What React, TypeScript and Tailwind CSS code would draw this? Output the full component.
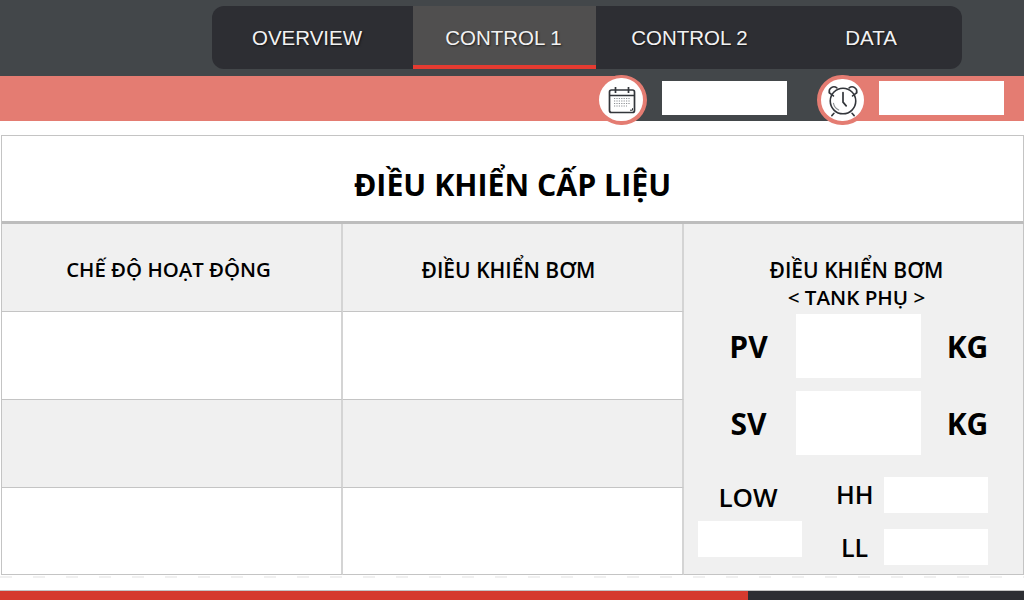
import React from 'react';

const font = "font-['Open_Sans','Noto_Sans',sans-serif]";

const CalendarIcon = () => (
  <svg className="ml-[2px]" width="30" height="30" viewBox="0 0 30 30" fill="none" stroke="#33363b" strokeWidth="1.7">
    <rect x="2.5" y="5" width="25" height="22.5" rx="2" />
    <path d="M2.5 10.5h25M8.5 2v6M21.5 2v6" />
    <path d="M23 25.2h2.5v-2" strokeWidth="1" />
    <g stroke="#8b8e92" strokeWidth="1.2" strokeDasharray="1.2 1.2">
      <path d="M7 13.5h16M7 16h16M7 18.5h16M7 21h13" />
    </g>
  </svg>
);

const ClockIcon = () => (
  <svg width="34" height="34" viewBox="0 0 32 32" fill="none" stroke="#33363b" strokeWidth="1.5" strokeLinecap="round">
    <circle cx="16" cy="17" r="12" />
    <path d="M3.2 9.2a4.4 4.4 0 0 1 7-4.6M28.8 9.2a4.4 4.4 0 0 0-7-4.6" />
    <path d="M3.2 9.2l3.8 3M28.8 9.2l-3.8 3" />
    <path d="M16 9v9l3 3.5" strokeWidth="1.6" />
    <path d="M7.5 28.5l-2 2.2M24.5 28.5l2 2.2" />
    <path d="M7 19a9 9 0 0 0 5 6.5" stroke="#8b8e92" strokeWidth="1" />
  </svg>
);

const Tab = ({ text, className, active }: { text: string; className: string; active?: boolean }) => (
  <div
    className={`${className} h-full flex items-center justify-center text-[20.5px] font-['Liberation_Sans',sans-serif] text-[#f2f2f2] [text-shadow:1px_1px_2px_rgba(0,0,0,0.6)] ${
      active ? 'bg-[#504f4f] border-b-[4px] border-[#e53b31] pt-[5px]' : 'pt-px'
    }`}
  >
    {text}
  </div>
);

const Cell = ({ text, gray, wide, last }: { text?: string; gray?: boolean; wide?: boolean; last?: boolean }) => (
  <div
    className={`${last ? 'h-[87px]' : 'h-[88px]'} flex items-center justify-center border-b border-b-[#c4c4c4] border-r-2 border-r-[#d4d4d4] font-semibold text-black ${
      wide ? 'pt-[7px] pr-[8px] text-[21px]' : 'pt-[3px] pr-[6px] text-[20.4px]'
    } ${gray ? 'bg-[#f0f0f0]' : 'bg-white'}`}
  >
    {text}
  </div>
);

const App = () => {
  return (
    <div className={`w-[1024px] h-[600px] overflow-hidden bg-white flex flex-col ${font}`}>
      <div className="h-[76px] bg-[#43474a] pl-[212px] pt-[6px]">
        <div className="w-[750px] h-[63px] bg-[#2d2e33] rounded-[12px] overflow-hidden flex">
          <Tab text="OVERVIEW" className="w-[201px] pr-[11px]" />
          <Tab text="CONTROL 1" className="w-[183px] pr-[2px]" active />
          <Tab text="CONTROL 2" className="w-[187px]" />
          <Tab text="DATA" className="w-[179px] pr-[3px]" />
        </div>
      </div>

      <div className="h-[45px] flex">
        <div className="w-[622px] bg-[#e47c72] relative">
          <div className="absolute right-[-25px] top-[-1px] w-[51px] h-[50px] rounded-full bg-white border-t-[3px] border-l-[3px] border-r-[4px] border-b-[4px] border-[#e47c72] flex items-center justify-center z-10">
            <CalendarIcon />
          </div>
        </div>
        <div className="w-[220px] bg-[#43474a] flex items-center pl-[40px] pb-px">
          <div className="w-[125px] h-[34px] bg-white" />
        </div>
        <div className="flex-1 bg-[#e47c72] relative flex items-center pl-[37px] pb-px">
          <div className="absolute left-[-25px] top-[-1px] w-[51px] h-[50px] rounded-full bg-white border-[4px] border-[#e47c72] flex items-center justify-center z-10">
            <ClockIcon />
          </div>
          <div className="w-[125px] h-[34px] bg-white" />
        </div>
      </div>

      <div className="h-[14px] bg-white" />

      <div className="h-[440px] ml-px border-t border-l border-[#c4c4c4] flex flex-col">
        <div className="h-[88px] flex items-center justify-center border-b-[3px] border-r border-b-[#bdbdbd] border-r-[#c4c4c4] text-[30.3px] font-bold text-black pt-[13px]">
          ĐIỀU KHIỂN CẤP LIỆU
        </div>
        <div className="grid grid-cols-[341px_341px_1fr] flex-1 min-h-0">
          <div className="flex flex-col">
            <Cell text="CHẾ ĐỘ HOẠT ĐỘNG" gray />
            <Cell />
            <Cell gray />
            <Cell last />
          </div>
          <div className="flex flex-col">
            <Cell text="ĐIỀU KHIỂN BƠM" gray wide />
            <Cell />
            <Cell gray />
            <Cell last />
          </div>
          <div className="bg-[#f0f0f0] border-b border-r border-[#c4c4c4] flex flex-col text-black">
            <div className="pt-[32px] pl-[6px] h-[90px] text-center font-semibold leading-[28px]">
              <div className="text-[21px]">ĐIỀU KHIỂN BƠM</div>
              <div className="text-[20.6px] -mt-px">{'< TANK PHỤ >'}</div>
            </div>
            <div className="flex items-center h-[64px] text-[30px] font-bold">
              <div className="w-[112px] pl-[17px] text-center">PV</div>
              <div className="w-[125px] h-[64px] bg-white" />
              <div className="flex-1 pr-[9px] text-center">KG</div>
            </div>
            <div className="flex items-center h-[64px] mt-[13px] text-[30px] font-bold">
              <div className="w-[112px] pl-[17px] text-center">SV</div>
              <div className="w-[125px] h-[64px] bg-white" />
              <div className="flex-1 pr-[9px] text-center">KG</div>
            </div>
            <div className="flex mt-[22px] pl-[14px]">
              <div className="w-[104px] pt-[5px]">
                <div className="text-center pr-[4px] text-[26px] font-semibold leading-[30px]">LOW</div>
                <div className="w-[104px] h-[36px] bg-white mt-[9px]" />
              </div>
              <div className="flex flex-col gap-[16px] pl-[34px]">
                <div className="flex items-center gap-[11px] h-[36px]">
                  <div className="w-[37px] text-center text-[25px] font-semibold pb-px whitespace-nowrap">HH</div>
                  <div className="w-[104px] h-[36px] bg-white" />
                </div>
                <div className="flex items-center gap-[11px] h-[36px]">
                  <div className="w-[37px] text-center text-[25px] font-semibold pt-[2px] whitespace-nowrap">LL</div>
                  <div className="w-[104px] h-[36px] bg-white" />
                </div>
              </div>
            </div>
          </div>
        </div>
      </div>

      <div className="h-[16px] bg-white border-b border-[#c4c4c4]">
        <div className="h-[2px] mt-px bg-[repeating-linear-gradient(90deg,#f0f0f0_0px,#f0f0f0_12px,#ffffff_12px,#ffffff_33px)]" />
      </div>

      <div className="flex-1 flex">
        <div className="w-[748px] bg-[#d53a2e]" />
        <div className="flex-1 bg-[#2d2e33]" />
      </div>
    </div>
  );
};

export default App;
